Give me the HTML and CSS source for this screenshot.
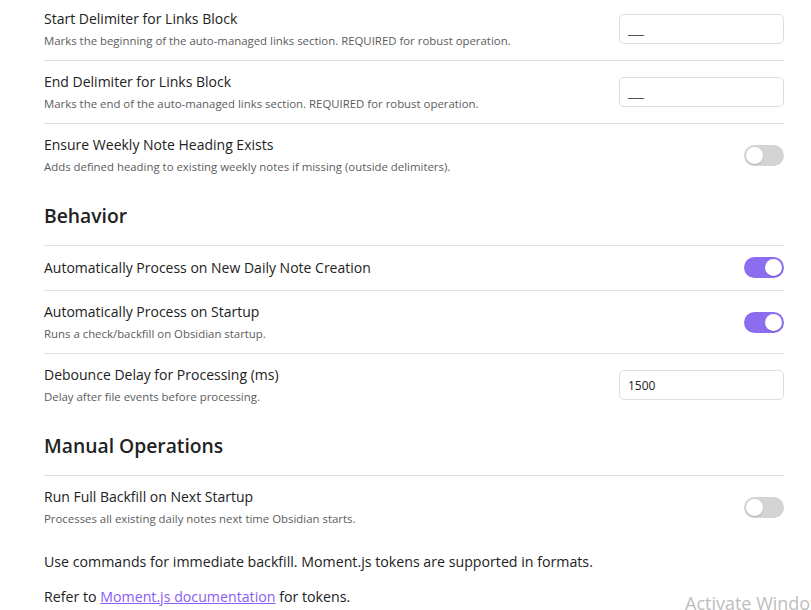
FILE: index.html
```html
<!DOCTYPE html>
<html>
<head>
<meta charset="utf-8">
<link rel="stylesheet" href="styles.css">
</head>
<body>
<div class="settings">
  <div class="item first">
    <div class="info">
      <div class="name">Start Delimiter for Links Block</div>
      <div class="desc">Marks the beginning of the auto-managed links section. REQUIRED for robust operation.</div>
    </div>
    <div class="control"><input class="text" type="text" value="___"></div>
  </div>
  <div class="item">
    <div class="info">
      <div class="name">End Delimiter for Links Block</div>
      <div class="desc">Marks the end of the auto-managed links section. REQUIRED for robust operation.</div>
    </div>
    <div class="control"><input class="text" type="text" value="___"></div>
  </div>
  <div class="item">
    <div class="info">
      <div class="name">Ensure Weekly Note Heading Exists</div>
      <div class="desc">Adds defined heading to existing weekly notes if missing (outside delimiters).</div>
    </div>
    <div class="control"><div class="toggle"><span class="knob"></span></div></div>
  </div>

  <h3 class="heading">Behavior</h3>
  <div class="item single">
    <div class="info">
      <div class="name">Automatically Process on New Daily Note Creation</div>
    </div>
    <div class="control"><div class="toggle on"><span class="knob"></span></div></div>
  </div>
  <div class="item">
    <div class="info">
      <div class="name">Automatically Process on Startup</div>
      <div class="desc">Runs a check/backfill on Obsidian startup.</div>
    </div>
    <div class="control"><div class="toggle on"><span class="knob"></span></div></div>
  </div>
  <div class="item">
    <div class="info">
      <div class="name">Debounce Delay for Processing (ms)</div>
      <div class="desc">Delay after file events before processing.</div>
    </div>
    <div class="control"><input class="text" type="text" value="1500"></div>
  </div>

  <h3 class="heading">Manual Operations</h3>
  <div class="item">
    <div class="info">
      <div class="name">Run Full Backfill on Next Startup</div>
      <div class="desc">Processes all existing daily notes next time Obsidian starts.</div>
    </div>
    <div class="control"><div class="toggle"><span class="knob"></span></div></div>
  </div>

  <p class="note">Use commands for immediate backfill. Moment.js tokens are supported in formats.</p>
  <p class="note">Refer to <a href="#">Moment.js documentation</a> for tokens.</p>
</div>
<div class="watermark">Activate Windows</div>
</body>
</html>
```
FILE: styles.css
```css
html, body {
  margin: 0;
  padding: 0;
  background: #ffffff;
  overflow: hidden;
  height: 610px;
}
body {
  font-family: "Open Sans", "Noto Sans", sans-serif;
  color: #222222;
  position: relative;
}
.settings {
  margin: -3px 27px 0 44px;
  display: flex;
  flex-direction: column;
}
.item {
  display: flex;
  align-items: center;
  justify-content: space-between;
  border-top: 1px solid #e0e0e0;
  padding: 11px 0;
  min-height: 20px;
}
.item.single {
  padding: 11px 0 12px;
}
.item.first {
  border-top: 1px solid transparent;
}
.info {
  display: flex;
  flex-direction: column;
  gap: 3px;
}
.name {
  font-size: 14px;
  line-height: 20px;
  color: #222222;
}
.desc {
  font-size: 11.4px;
  line-height: 17px;
  color: #5c5c5c;
}
.control {
  display: flex;
  align-items: center;
}
.text {
  width: 165px;
  height: 30px;
  box-sizing: border-box;
  border: 1px solid #dedede;
  border-radius: 5px;
  padding: 0 8px;
  font-family: "Open Sans", sans-serif;
  font-size: 12px;
  color: #222222;
  background: #ffffff;
  outline: none;
}
.toggle {
  width: 40px;
  height: 21px;
  border-radius: 11px;
  background: #d4d4d4;
  position: relative;
  box-sizing: border-box;
}
.toggle .knob {
  position: absolute;
  top: 2px;
  left: 2px;
  width: 17px;
  height: 17px;
  border-radius: 50%;
  background: #ffffff;
  box-shadow: 0 1px 1px rgba(0,0,0,0.15);
}
.toggle.on {
  background: #8c6df0;
}
.toggle.on .knob {
  left: 21px;
}
.heading {
  margin: 0;
  padding: 17px 0 16px;
  font-size: 19.3px;
  line-height: 26px;
  font-weight: 600;
  color: #222222;
}
.note {
  margin: 0;
  font-size: 14.2px;
  line-height: 20px;
  color: #222222;
}
.item + .note {
  margin-top: 14px;
}
.note + .note {
  margin-top: 15px;
}
.note a {
  color: #8a5cf5;
  text-decoration: underline;
}
.watermark {
  position: absolute;
  left: 685px;
  top: 591px;
  font-family: "Open Sans", sans-serif;
  font-size: 18px;
  color: #bdbdbd;
  white-space: nowrap;
}
```
